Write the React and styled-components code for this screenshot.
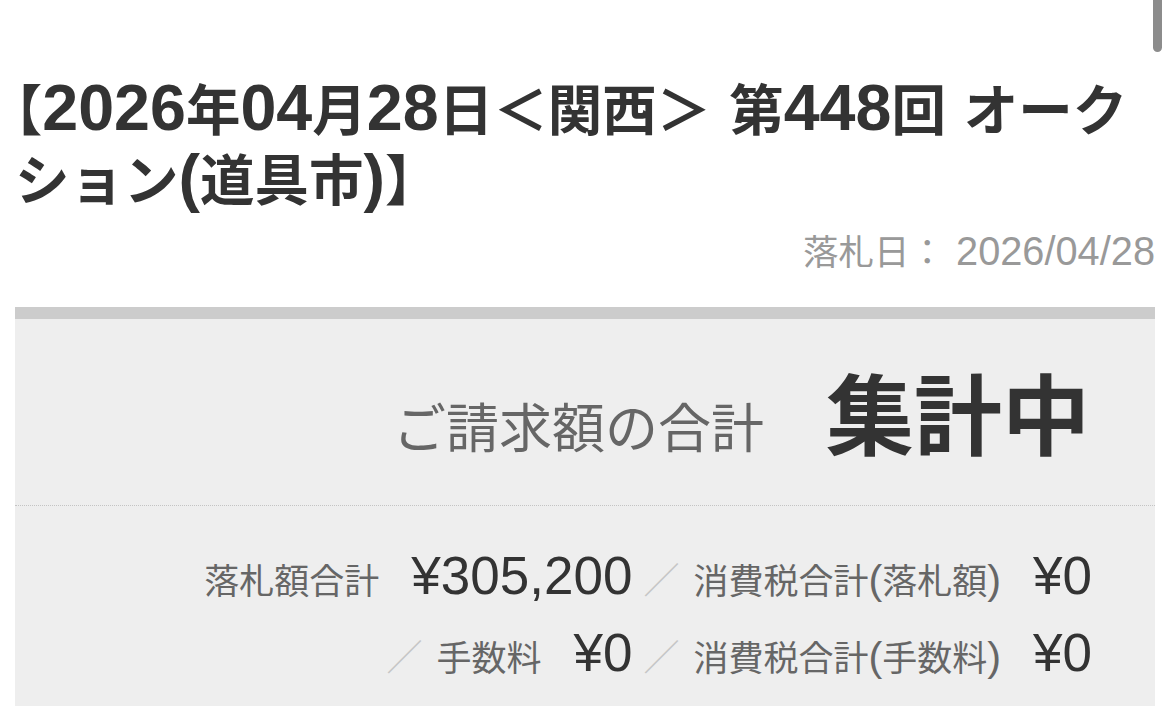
import React from "react";
import styled, { createGlobalStyle } from "styled-components";

const GlobalStyle = createGlobalStyle`
  html, body {
    margin: 0;
    padding: 0;
    background: #fff;
  }
  body {
    font-family: "Noto Sans CJK JP", "Liberation Sans", sans-serif;
    -webkit-font-smoothing: antialiased;
  }
`;

const Page = styled.main`
  position: relative;
  padding: 72px 15px 0;
`;

const ScrollIndicator = styled.div`
  position: fixed;
  top: 0;
  right: 8px;
  width: 9px;
  height: 52px;
  background: #8c8c8c;
  border-radius: 0 0 5px 5px;
`;

/* Latin runs (digits, parens, spaces) are set a little larger than the kana/kanji */
const Num = styled.span`
  font-family: "Liberation Sans", sans-serif;
  font-size: ${(p) => p.$scale || 1.185}em;
  line-height: 1;
`;

const Bracket = styled.span`
  font-feature-settings: "halt";
`;

const Title = styled.h1`
  margin: 0;
  font-size: 54.5px;
  line-height: 70px;
  font-weight: 700;
  color: #333;
`;

const DateLine = styled.p`
  margin: 13px 0 0;
  text-align: right;
  font-size: 35.5px;
  line-height: 50px;
  color: #999;
`;

const Panel = styled.section`
  margin-top: 32px;
  background: #eee;
  border-top: 12px solid #ccc;
`;

const Summary = styled.div`
  display: flex;
  justify-content: flex-end;
  align-items: baseline;
  gap: 62px;
  padding: 47px 65px 51px;
  border-bottom: 1px dotted #c4c4c4;
`;

const SummaryLabel = styled.span`
  font-size: 53px;
  line-height: 1;
  color: #666;
`;

const SummaryValue = styled.strong`
  font-size: 88px;
  line-height: 1;
  font-weight: 700;
  color: #333;
`;

const Breakdown = styled.div`
  display: flex;
  flex-wrap: wrap;
  justify-content: flex-end;
  padding: 31px 63px 40px 30px;
`;

const Item = styled.div`
  display: flex;
  align-items: baseline;
`;

const Slash = styled.span`
  font-size: 36px;
  line-height: 1;
  color: #c6c6c6;
  margin: 0 14px 0 11px;
`;

const Label = styled.span`
  font-size: 35px;
  line-height: 1;
  color: #666;
  margin-right: 32px;
`;

const Value = styled.span`
  font-family: "Liberation Sans", sans-serif;
  font-size: 53px;
  line-height: 77px;
  color: #333;
`;

const items = [
  { label: ["落札額合計"], value: "¥305,200", first: true },
  { label: ["消費税合計", "(", "落札額", ")"], value: "¥0" },
  { label: ["手数料"], value: "¥0" },
  { label: ["消費税合計", "(", "手数料", ")"], value: "¥0" },
];

const LabelText = ({ parts }) =>
  parts.map((p, i) =>
    p === "(" || p === ")" ? <Num key={i}>{p}</Num> : <React.Fragment key={i}>{p}</React.Fragment>
  );

export default function App() {
  return (
    <>
      <GlobalStyle />
      <Page>
        <ScrollIndicator />
        <Title>
          <Bracket>【</Bracket>
          <Num>2026</Num>年<Num>04</Num>月<Num>28</Num>日＜関西＞<Num> </Num>第<Num>448</Num>回<Num> </Num>
          オークション<Num>(</Num>道具市<Num>)</Num>
          <Bracket>】</Bracket>
        </Title>
        <DateLine>
          落札日：<Num $scale={1.12}> 2026/04/28</Num>
        </DateLine>
        <Panel>
          <Summary>
            <SummaryLabel>ご請求額の合計</SummaryLabel>
            <SummaryValue>集計中</SummaryValue>
          </Summary>
          <Breakdown>
            {items.map((it, i) => (
              <Item key={i}>
                {!it.first && <Slash>／</Slash>}
                <Label>
                  <LabelText parts={it.label} />
                </Label>
                <Value>{it.value}</Value>
              </Item>
            ))}
          </Breakdown>
        </Panel>
      </Page>
    </>
  );
}
